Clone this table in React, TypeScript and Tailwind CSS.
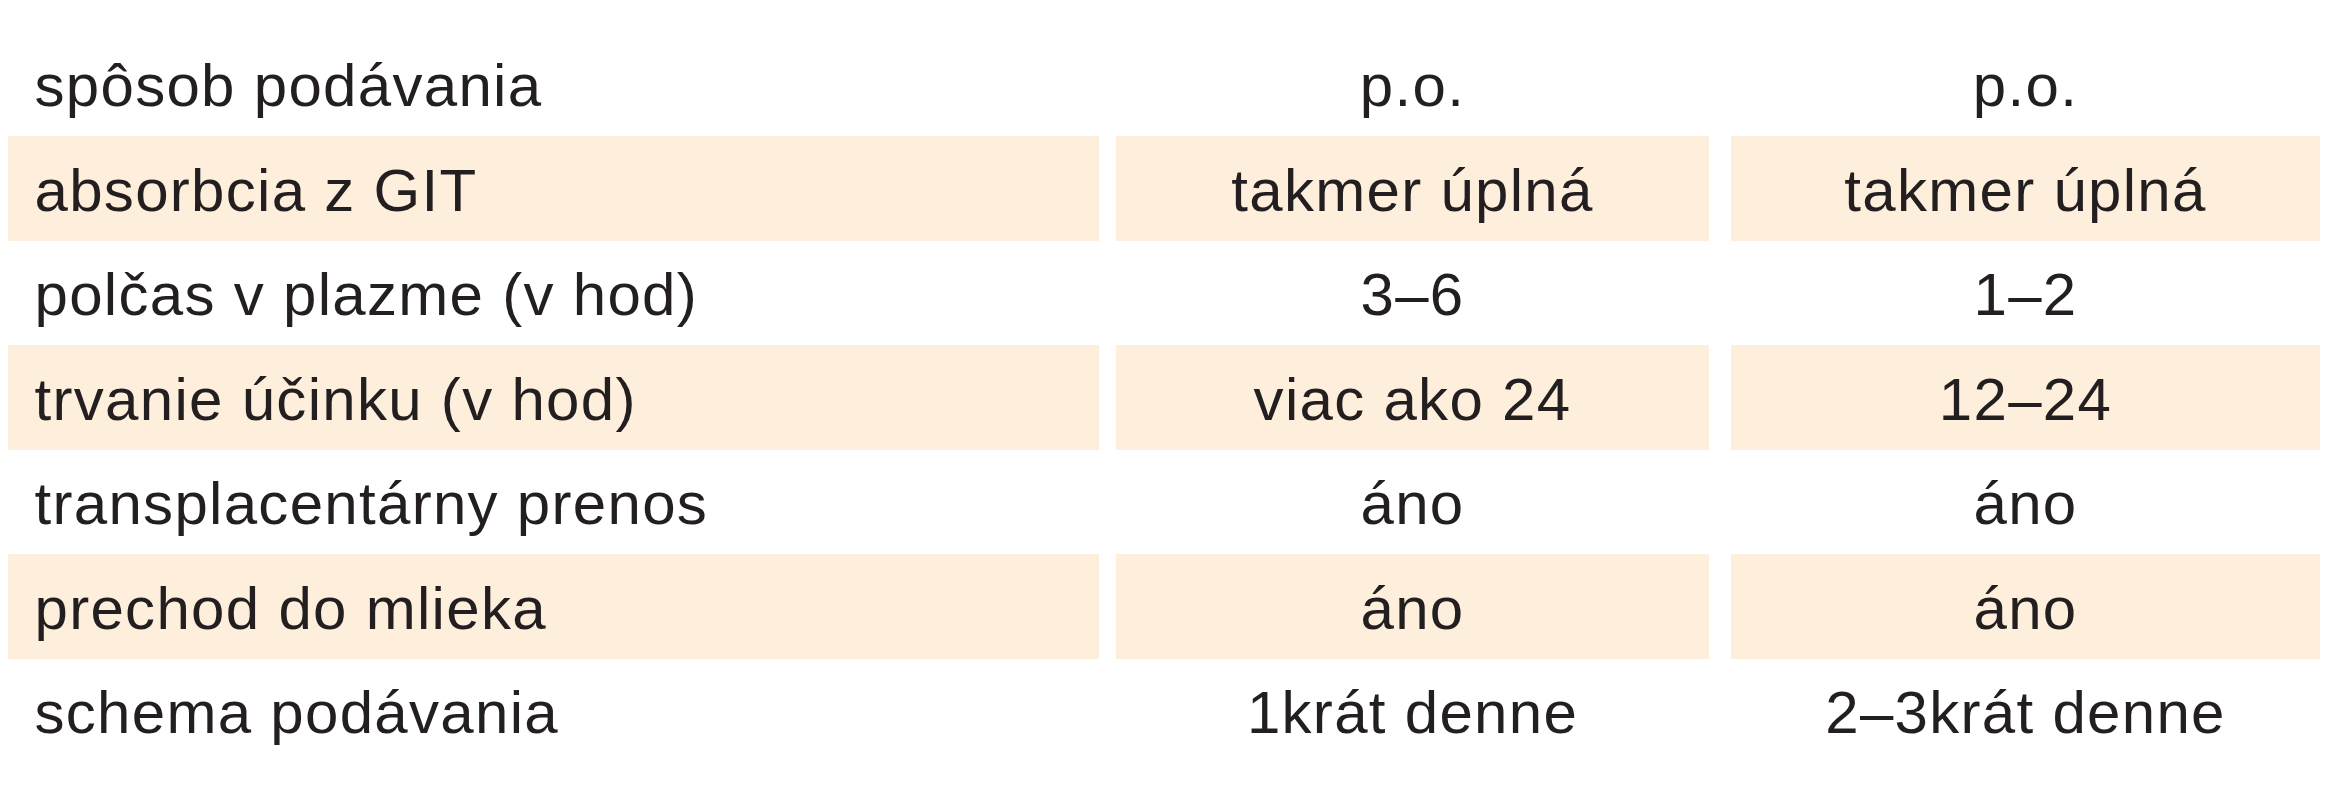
const rows: [string, string, string][] = [
  ["spôsob podávania", "p.o.", "p.o."],
  ["absorbcia z GIT", "takmer úplná", "takmer úplná"],
  ["polčas v plazme (v hod)", "3–6", "1–2"],
  ["trvanie účinku (v hod)", "viac ako 24", "12–24"],
  ["transplacentárny prenos", "áno", "áno"],
  ["prechod do mlieka", "áno", "áno"],
  ["schema podávania", "1krát denne", "2–3krát denne"],
];

export default function App() {
  return (
    <div
      className="w-[2345px] h-[800px] bg-white pt-[31.5px] text-[#231f20] text-[60px] leading-none tracking-[1.3px]"
      style={{ fontFamily: '"Liberation Sans", Arial, sans-serif' }}
    >
      {rows.map(([label, a, b], i) => {
        const shaded = i % 2 === 1;
        const cell = shaded ? "bg-[#fdefdb]" : "";
        return (
          <div key={label} className="flex h-[104.5px]">
            <div className={`ml-[7.5px] w-[1091.5px] flex items-center pl-[27px] pt-[5px] ${cell}`}>
              {label}
            </div>
            <div className={`ml-[17px] w-[593px] flex items-center justify-center pt-[5px] ${cell}`}>
              {a}
            </div>
            <div className={`ml-[22px] w-[589px] flex items-center justify-center pt-[5px] ${cell}`}>
              {b}
            </div>
          </div>
        );
      })}
    </div>
  );
}
